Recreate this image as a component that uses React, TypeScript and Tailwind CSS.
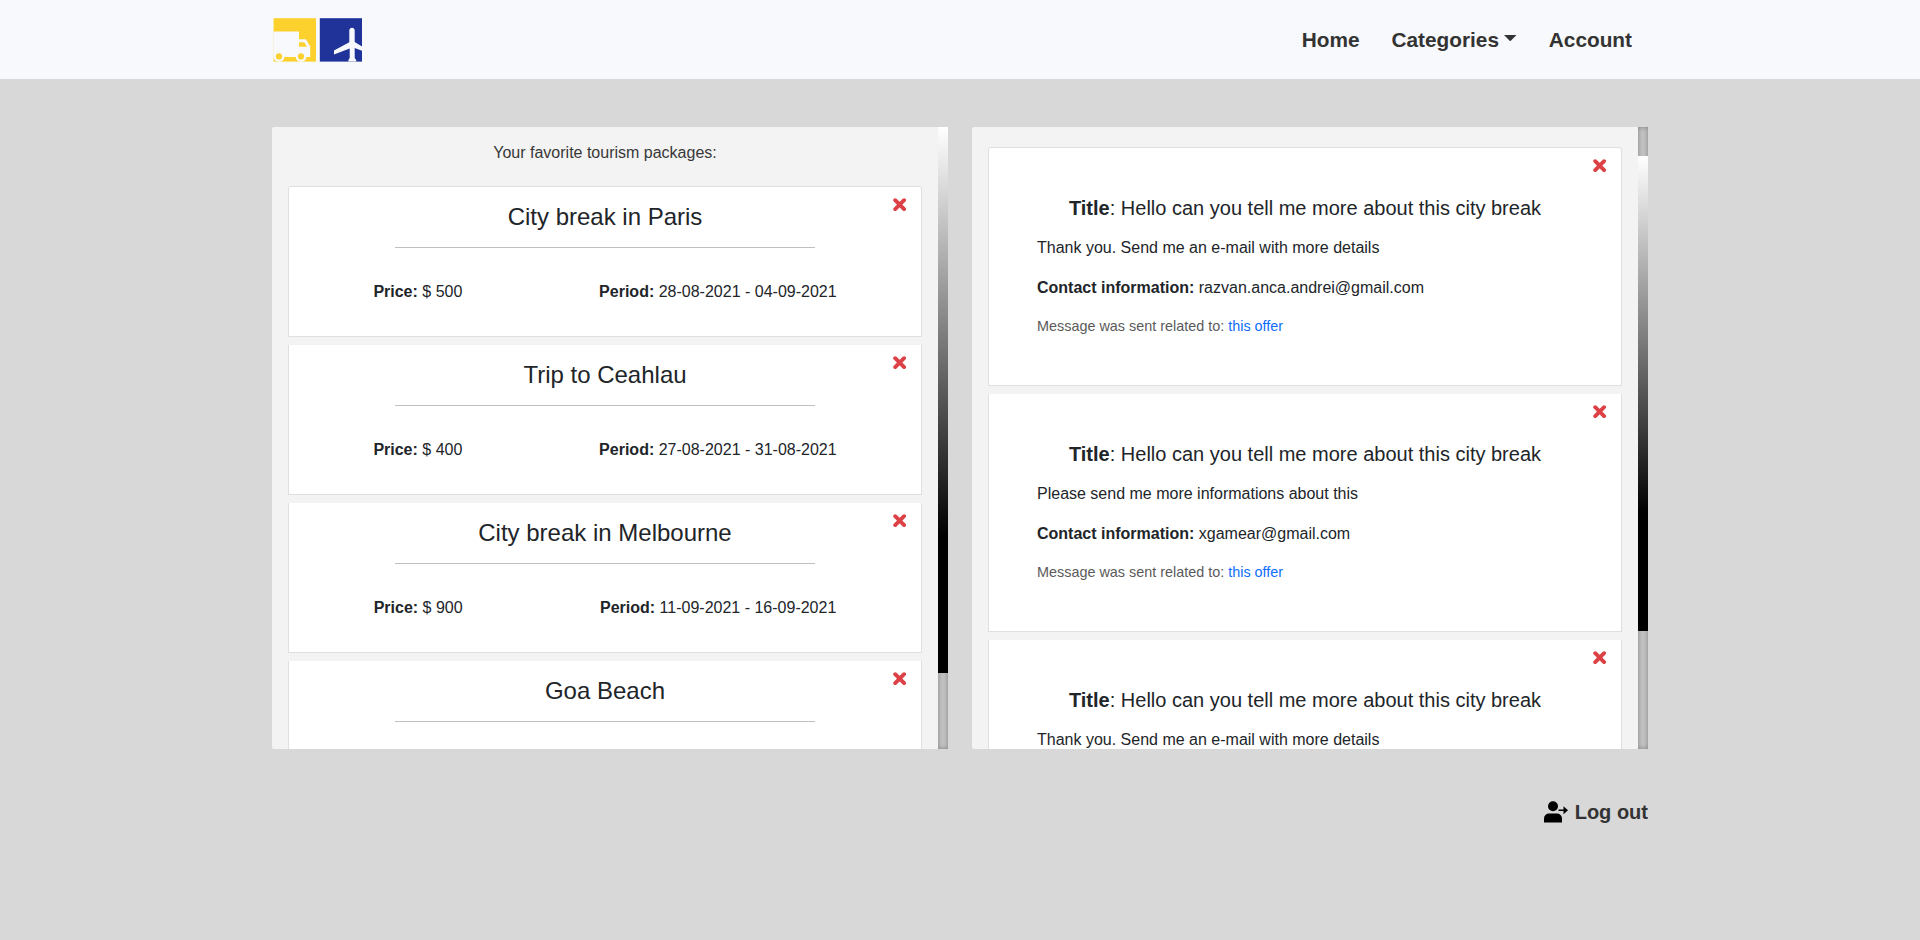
import React from "react";

const packages = [
  { title: "City break in Paris", price: 500, period: "28-08-2021 - 04-09-2021" },
  { title: "Trip to Ceahlau", price: 400, period: "27-08-2021 - 31-08-2021" },
  { title: "City break in Melbourne", price: 900, period: "11-09-2021 - 16-09-2021" },
  { title: "Goa Beach" },
];

const messages = [
  { body: "Thank you. Send me an e-mail with more details", contact: "razvan.anca.andrei@gmail.com" },
  { body: "Please send me more informations about this", contact: "xgamear@gmail.com" },
  { body: "Thank you. Send me an e-mail with more details" },
];

function Logo() {
  return (
    <svg className="h-[44px] w-[90px]" viewBox="0 0 90 44" aria-hidden="true">
      <rect x="1.6" y="0.2" width="42.4" height="43.4" fill="#fcd12e" />
      <path d="M1.4 13.4H27V21.2h6.8l4.4 7V39H1.4z" fill="#f8f9fc" />
      <path d="M27 24.2h5.200l2.800 4.600H27z" fill="#fcd12e" />
      <circle cx="7" cy="38.400" r="5.400" fill="#f8f9fc" />
      <circle cx="29" cy="38.400" r="5.400" fill="#f8f9fc" />
      <circle cx="7" cy="38.400" r="3.100" fill="#fcd12e" />
      <circle cx="29" cy="38.400" r="3.100" fill="#fcd12e" />
      <rect x="47.800" y="0.200" width="42.200" height="43.400" fill="#1f3399" />
      <path
        d="M77.300 12.500c0-3.600 5.400-3.600 5.400 0V24l7.300 4.400v4.400l-7.300-2.800V40l1.500 2v1.600h-7.800V42l1.300-2V30.400L62 36.400v-4l15.300-8.200z"
        fill="#f8f9fc"
      />
    </svg>
  );
}

function Remove() {
  return (
    <button className="absolute top-[11px] right-[15px] flex text-[#dc4146]" aria-label="Remove">
      <svg className="h-[13.3px] w-[13.3px]" viewBox="0 0 13.3 13.3" aria-hidden="true">
        <path d="M2.2 2.2l8.900 8.900M11.100 2.200l-8.900 8.900" stroke="currentColor" strokeWidth="3.9" strokeLinecap="round" />
      </svg>
    </button>
  );
}

function Scrollbar({ thumb }: { thumb: string }) {
  return (
    <div className="w-[10px] shrink-0 bg-[#c3c3c3] shadow-[inset_0_0_5px_#808080]">
      <div className={`bg-[linear-gradient(to_bottom,#fff,#000_75%)] ${thumb}`} />
    </div>
  );
}

export default function App() {
  return (
    <div className="h-[940px] overflow-hidden bg-[#d8d8d8] font-['Liberation_Sans',Arial,sans-serif] text-base text-[#212529]">
      <header className="h-[79px] bg-[#f8f9fc]">
        <div className="mx-auto flex h-full w-[1376px] items-center justify-between">
          <Logo />
          <nav className="flex gap-8 pr-4 text-[20.8px] font-bold text-[#333]">
            <a>Home</a>
            <a className="flex">
              Categories
              <svg className="mt-[11px] ml-[5.3px] h-[6.3px] w-[12.5px]" viewBox="0 0 12.5 6.3" aria-hidden="true">
                <path d="M0 0h12.5L6.250 6.300z" fill="currentColor" />
              </svg>
            </a>
            <a>Account</a>
          </nav>
        </div>
      </header>

      <main className="mx-auto w-[1376px] pt-12">
        <div className="flex gap-6">
          <section className="flex h-[622px] flex-1 overflow-hidden rounded-l-[2px] bg-[#f3f3f3]">
            <div className="flex-1 overflow-hidden px-4 pt-[14px]">
              <p className="mb-[21px] text-center leading-6 text-[#383838]">Your favorite tourism packages:</p>
              <ul className="flex flex-col gap-2">
                {packages.map((p) => (
                  <li
                    key={p.title}
                    className="relative h-[150px] shrink-0 border border-t-0 border-[#dfdfdf] bg-white px-4 first:h-[151px] first:rounded-t-[3px] first:border-t"
                  >
                    <Remove />
                    <h2 className="pt-[15px] text-center text-2xl leading-[29px]">{p.title}</h2>
                    <hr className="mx-auto mt-4 w-[420px] border-[#c0c0c0]" />
                    {p.period && (
                      <div className="mt-8 flex justify-around leading-6">
                        <span><b>Price:</b> $ {p.price}</span>
                        <span><b>Period:</b> {p.period}</span>
                      </div>
                    )}
                  </li>
                ))}
              </ul>
            </div>
            <Scrollbar thumb="h-[546px]" />
          </section>

          <section className="flex h-[622px] flex-1 overflow-hidden rounded-l-[2px] bg-[#f3f3f3]">
            <ul className="flex flex-1 flex-col gap-2 overflow-hidden px-4 pt-5">
              {messages.map((m, i) => (
                <li
                  key={i}
                  className="relative h-[238px] shrink-0 border border-t-0 border-[#dfdfdf] bg-white px-12 pt-12 first:h-[239px] first:rounded-t-[3px] first:border-t"
                >
                  <Remove />
                  <h3 className="text-center text-xl leading-6"><b>Title</b>: Hello can you tell me more about this city break</h3>
                  <p className="mt-4 leading-6">{m.body}</p>
                  {m.contact && (
                    <>
                      <p className="mt-4 leading-6"><b>Contact information:</b> {m.contact}</p>
                      <p className="mt-4 text-[14.4px] leading-[21px] text-[#5a5a5a]">
                        Message was sent related to: <a className="text-[#0d6efd]">this offer</a>
                      </p>
                    </>
                  )}
                </li>
              ))}
            </ul>
            <Scrollbar thumb="mt-[29px] h-[475px]" />
          </section>
        </div>

        <div className="mt-12 flex items-center justify-end gap-[7px]">
          <svg className="h-[22px] w-6" viewBox="0 0 24 22" aria-hidden="true">
            <circle cx="9" cy="5.2" r="5" />
            <path d="M0 21.5V17.5a5 5 0 0 1 5-5h8a5 5 0 0 1 5 5v4z" />
            <path d="M14.5 8.4h5V5.200L24 9.200l-4.500 4v-3.200h-5z" />
          </svg>
          <a className="text-[20px] leading-[30px] font-bold text-[#333]">Log out</a>
        </div>
      </main>
    </div>
  );
}
